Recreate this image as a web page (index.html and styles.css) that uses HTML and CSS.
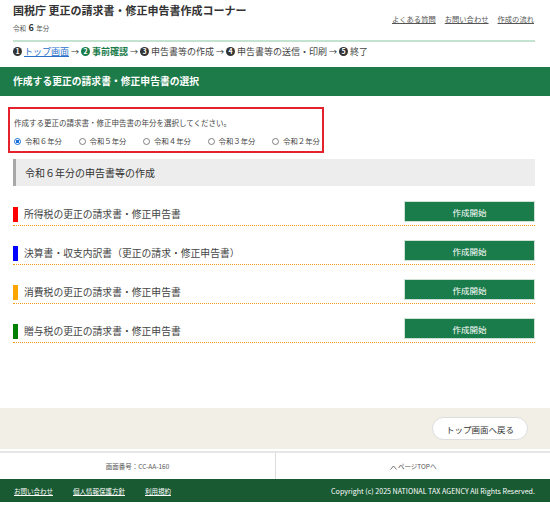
FILE: index.html
```html
<!DOCTYPE html>
<html lang="ja">
	<head>
		<meta charset="utf-8">
		<title>更正の請求書・修正申告書作成コーナー</title>
		<link rel="stylesheet" href="styles.css">
	</head>
	<body>
		<div id="header">
			<div class="head-row">
				<div class="head-left">
					<h1 class="site-title">国税庁 更正の請求書・修正申告書作成コーナー</h1>
					<div class="year">令和 <b>6</b> 年分</div>
				</div>
				<ul class="head-links">
					<li><a href="#">よくある質問</a></li>
					<li><a href="#">お問い合わせ</a></li>
					<li><a href="#">作成の流れ</a></li>
				</ul>
			</div>
			<ol class="steps">
				<li><span class="num">1</span><a href="#">トップ画面</a></li>
				<li class="arrow">→</li>
				<li class="current"><span class="num">2</span>事前確認</li>
				<li class="arrow">→</li>
				<li><span class="num">3</span>申告書等の作成</li>
				<li class="arrow">→</li>
				<li><span class="num">4</span>申告書等の送信・印刷</li>
				<li class="arrow">→</li>
				<li><span class="num">5</span>終了</li>
			</ol>
		</div>

		<div class="bar">作成する更正の請求書・修正申告書の選択</div>

		<div class="select-box">
			<p class="prompt">作成する更正の請求書・修正申告書の年分を選択してください。</p>
			<div class="radios">
				<label><input type="radio" name="year" checked>令和６年分</label>
				<label><input type="radio" name="year">令和５年分</label>
				<label><input type="radio" name="year">令和４年分</label>
				<label><input type="radio" name="year">令和３年分</label>
				<label><input type="radio" name="year">令和２年分</label>
			</div>
		</div>

		<div id="content">
			<h2 class="sub-head">令和６年分の申告書等の作成</h2>
			<div class="rows">
				<div class="row">
					<span class="mark red"></span>
					<span class="row-label">所得税の更正の請求書・修正申告書</span>
					<button class="start">作成開始</button>
				</div>
				<div class="row">
					<span class="mark blue"></span>
					<span class="row-label">決算書・収支内訳書（更正の請求・修正申告書）</span>
					<button class="start">作成開始</button>
				</div>
				<div class="row">
					<span class="mark orange"></span>
					<span class="row-label">消費税の更正の請求書・修正申告書</span>
					<button class="start">作成開始</button>
				</div>
				<div class="row">
					<span class="mark green"></span>
					<span class="row-label">贈与税の更正の請求書・修正申告書</span>
					<button class="start">作成開始</button>
				</div>
			</div>
		</div>

		<div class="back-area">
			<button class="back">トップ画面へ戻る</button>
		</div>

		<div class="page-info">
			<div>画面番号：CC-AA-160</div>
			<div><svg class="chev" width="7" height="5" viewBox="0 0 7 5"><polyline points="0.5,4.5 3.5,1 6.5,4.5" fill="none" stroke="#666" stroke-width="0.9"/></svg> ページTOPへ</div>
		</div>

		<div class="footer">
			<a href="#">お問い合わせ</a>
			<a href="#">個人情報保護方針</a>
			<a href="#">利用規約</a>
			<span class="copyright">Copyright (c) 2025 NATIONAL TAX AGENCY All Rights Reserved.</span>
		</div>
	</body>
</html>
```

FILE: styles.css
```css
body {
	margin: 0;
	font-family: "Noto Sans CJK JP", sans-serif;
	color: #333;
	background: #fff;
}
#header {
	margin: 0 15px 0 13px;
}
.head-row {
	display: flex;
	justify-content: space-between;
}
.site-title {
	margin: 0;
	padding-top: 3px;
	font-size: 11px;
	line-height: 14px;
	font-weight: bold;
	color: #333;
}
.year {
	margin-top: 5px;
	font-size: 6.5px;
	line-height: 12px;
	color: #555;
}
.year b {
	margin: 0 1px;
	font-size: 9px;
	color: #333;
}
.head-links {
	list-style: none;
	margin: 13px 1px 0 0;
	padding: 0;
	display: flex;
	gap: 9px;
	font-size: 7.3px;
	line-height: 12px;
}
.head-links a {
	color: #555;
}
.steps {
	list-style: none;
	margin: 6px 0 0;
	padding: 0;
	border-top: 2px solid #c3e2cf;
	display: flex;
	align-items: center;
	height: 18px;
	font-size: 9px;
	color: #444;
}
.steps li {
	display: flex;
	align-items: center;
}
.steps a {
	color: #2a6fc9;
}
.steps .arrow {
	margin: 0 2px 0 2px;
	font-size: 8px;
	color: #333;
}
.steps .num {
	display: inline-block;
	width: 9px;
	height: 9px;
	margin-right: 2px;
	border-radius: 50%;
	background: #333;
	color: #fff;
	font-size: 7px;
	font-weight: bold;
	line-height: 9px;
	text-align: center;
}
.steps .current {
	color: #1b7c4b;
	font-weight: bold;
}
.steps .current .num {
	background: #1b7c4b;
}
.bar {
	margin-top: 7px;
	height: 29px;
	line-height: 29px;
	padding-left: 13px;
	background: #1c7b49;
	color: #fff;
	font-size: 9.8px;
	font-weight: bold;
}
.select-box {
	margin: 11px 0 0 8px;
	width: 316px;
	box-sizing: border-box;
	border: 2px solid #e5212b;
	padding: 8px 2px 4px 4px;
}
.prompt {
	margin: 0;
	font-size: 7.5px;
	line-height: 12px;
	color: #444;
}
.radios {
	margin-top: 6px;
	display: flex;
	white-space: nowrap;
	font-size: 7.4px;
	line-height: 12px;
	color: #444;
}
.radios label {
	display: inline-flex;
	align-items: center;
	width: 65px;
}
.radios label:last-child {
	width: auto;
}
.radios input {
	appearance: none;
	-webkit-appearance: none;
	box-sizing: border-box;
	width: 7px;
	height: 7px;
	margin: 0 4px 0 0;
	border: 1px solid #808080;
	border-radius: 50%;
	background: #fff;
}
.radios input:checked {
	border-color: #1a6fd8;
	background: radial-gradient(circle, #1a6fd8 0 1.6px, #fff 2px);
}
#content {
	margin: 6px 15px 0 13px;
}
.sub-head {
	margin: 0;
	height: 27px;
	line-height: 27px;
	padding-left: 9px;
	border-left: 3px solid #a8a8a8;
	background: #ededed;
	font-size: 10px;
	font-weight: normal;
	color: #333;
}
.rows {
	margin-top: 1px;
}
.row {
	display: flex;
	align-items: flex-end;
	padding: 14px 0 3px;
	border-bottom: 1px dotted #f29b1a;
}
.mark {
	width: 5px;
	height: 15px;
	margin-right: 6px;
}
.mark.red { background: #ff0000; }
.mark.blue { background: #0000ff; }
.mark.orange { background: #ffa500; }
.mark.green { background: #008000; }
.row-label {
	flex: 1;
	font-size: 9.8px;
	line-height: 15px;
	color: #444;
}
.start {
	width: 131px;
	height: 21px;
	padding: 0;
	border: 1px solid #cfe0d5;
	background: #1b7c4b;
	color: #fff;
	font-family: inherit;
	font-size: 8.5px;
}
.back-area {
	margin-top: 65px;
	height: 41px;
	background: #f2efe6;
	display: flex;
	justify-content: flex-end;
	align-items: center;
	padding-right: 22px;
}
.back {
	width: 96px;
	height: 23px;
	padding: 0;
	border: 1px solid #ddd;
	border-radius: 12px;
	background: #fff;
	color: #333;
	font-family: inherit;
	font-size: 8.5px;
}
.page-info {
	margin-top: 2px;
	border-top: 2px solid #e6e6e6;
	display: grid;
	grid-template-columns: 1fr 1fr;
	height: 26px;
	font-size: 6.5px;
	line-height: 26px;
	text-align: center;
	color: #555;
}
.page-info div + div {
	border-left: 1px solid #ddd;
}
.chev {
	vertical-align: middle;
}
.footer {
	height: 23px;
	background: #195a33;
	display: flex;
	align-items: center;
	gap: 20px;
	padding: 0 15px 0 14px;
	font-size: 6.5px;
	color: #fff;
}
.footer a {
	color: #fff;
}
.footer .copyright {
	margin-left: auto;
	font-size: 7.1px;
}
```
